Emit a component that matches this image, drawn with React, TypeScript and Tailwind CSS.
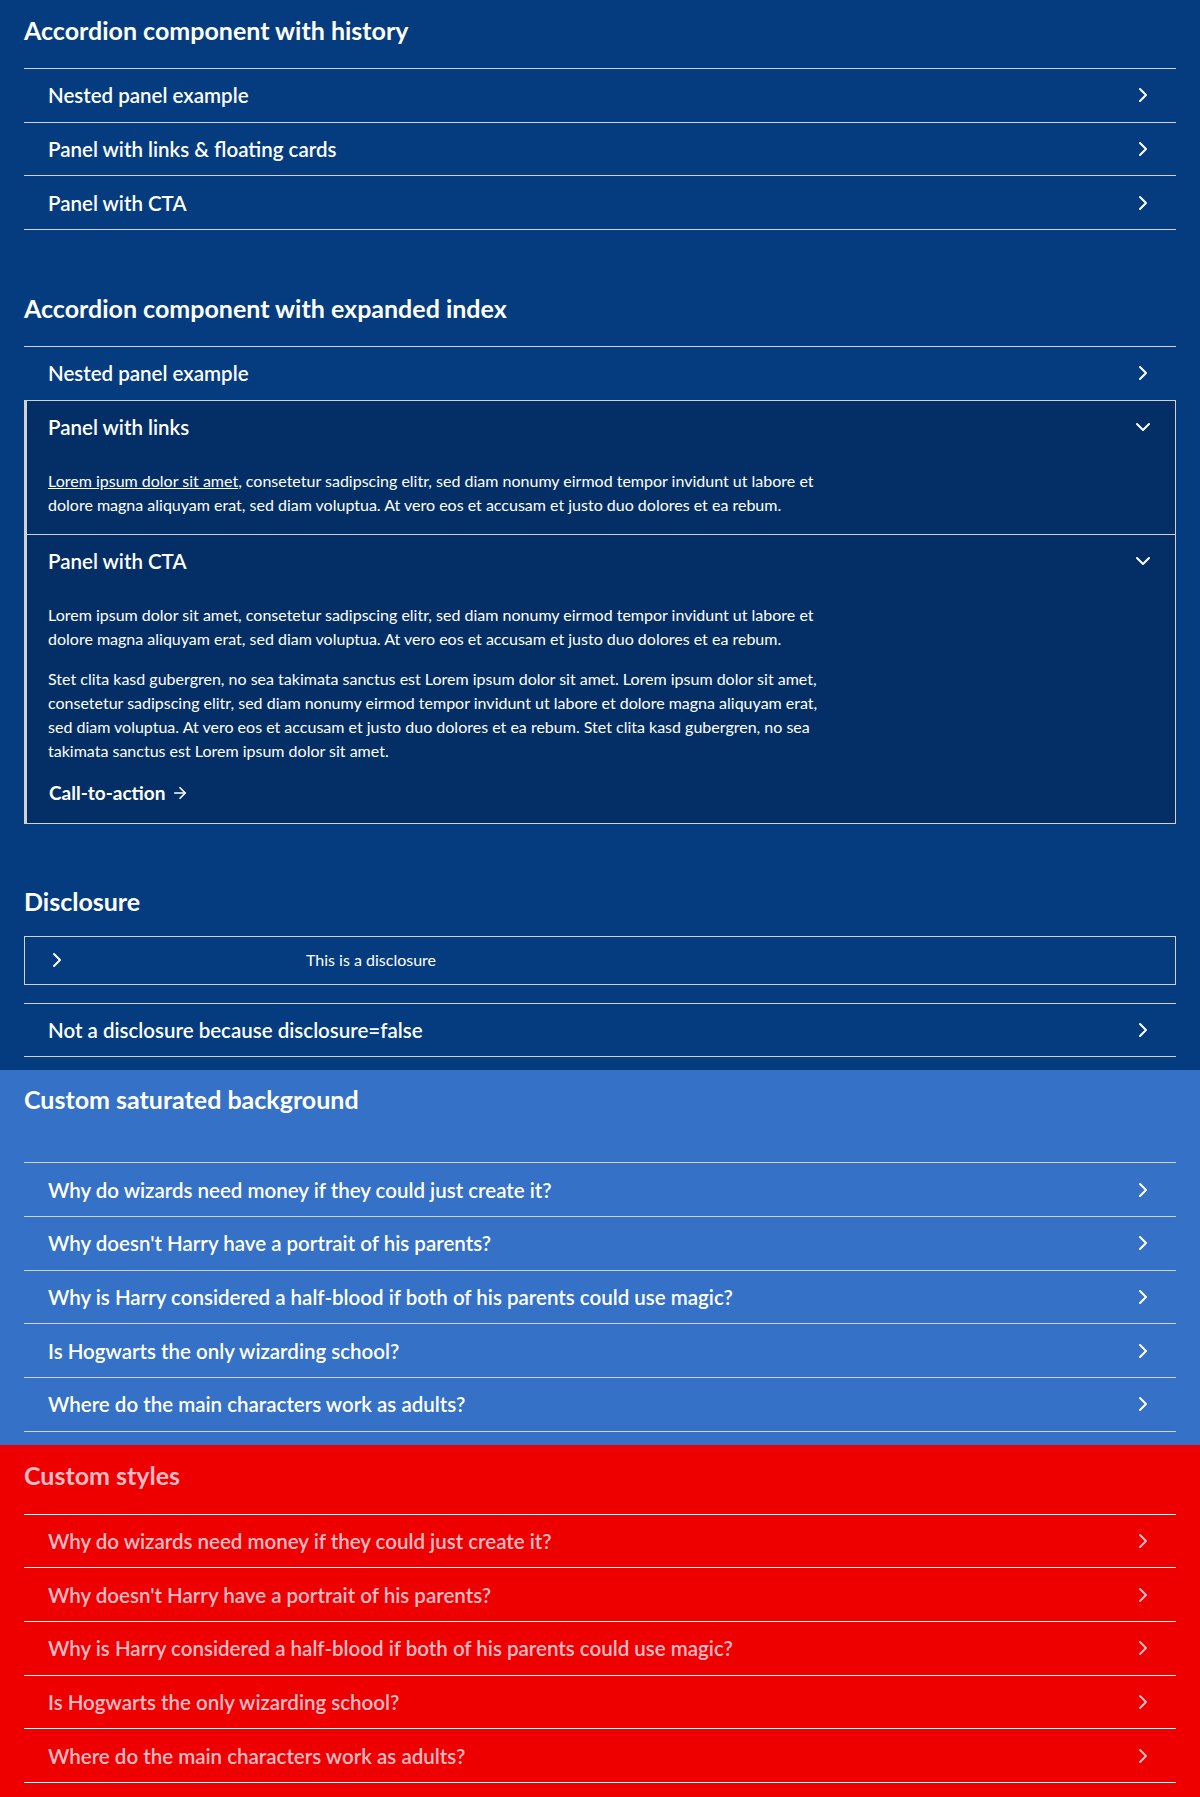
import { ArrowRight, ChevronDown, ChevronRight } from 'lucide-react'

interface RowProps {
  title: string
  last?: boolean
  line?: string
  text?: string
}

function Row({ title, last, line = 'border-[#d2d2d2]', text = 'text-white' }: RowProps) {
  return (
    <div className={`box-content flex h-[52.67px] items-center justify-between border-t ${line} ${last ? 'border-b' : ''} pl-6 pr-[21px] ${text}`}>
      <span className="text-[20.5px] font-semibold leading-[28px]">{title}</span>
      <ChevronRight size={24} strokeWidth={2} />
    </div>
  )
}

function Title({ children, className = '' }: { children: React.ReactNode; className?: string }) {
  return <h2 className={`text-[25px] font-bold leading-[28px] ${className}`}>{children}</h2>
}

const faqs = [
  'Why do wizards need money if they could just create it?',
  "Why doesn't Harry have a portrait of his parents?",
  'Why is Harry considered a half-blood if both of his parents could use magic?',
  'Is Hogwarts the only wizarding school?',
  'Where do the main characters work as adults?',
]

export default function App() {
  return (
    <div className="w-[1200px] text-white" style={{ fontFamily: 'Lato, "Liberation Sans", sans-serif' }}>
      {/* Dark blue examples */}
      <section className="bg-[#043c7f] px-6 pt-4 pb-[13px]">
        <Title className="mb-6">Accordion component with history</Title>
        <div>
          <Row title="Nested panel example" />
          <Row title="Panel with links & floating cards" />
          <Row title="Panel with CTA" last />
        </div>

        <Title className="mt-[64px] mb-6">Accordion component with expanded index</Title>
        <div>
          <Row title="Nested panel example" />
          {/* Expanded: Panel with links */}
          <div className="border-t border-l-[3px] border-r border-[#d2d2d2] bg-[#032f66]">
            <div className="flex h-[53px] items-center justify-between pl-[21px] pr-[20px]">
              <span className="text-[20.5px] font-semibold leading-[28px]">Panel with links</span>
              <ChevronDown size={24} strokeWidth={2} />
            </div>
            <div className="pl-[21px] pt-[15px] pb-[17px]">
              <p className="max-w-[790px] text-[16px] leading-[24px]">
                <a href="#" className="underline">Lorem ipsum dolor sit amet</a>, consetetur sadipscing elitr, sed diam nonumy eirmod tempor invidunt ut labore et dolore magna aliquyam erat, sed diam voluptua. At vero eos et accusam et justo duo dolores et ea rebum.
              </p>
            </div>
          </div>
          {/* Expanded: Panel with CTA */}
          <div className="border-y border-l-[3px] border-r border-[#d2d2d2] bg-[#032f66]">
            <div className="flex h-[53px] items-center justify-between pl-[21px] pr-[20px]">
              <span className="text-[20.5px] font-semibold leading-[28px]">Panel with CTA</span>
              <ChevronDown size={24} strokeWidth={2} />
            </div>
            <div className="pl-[21px] pt-[15px] pb-[17px] text-[16px] leading-[24px]">
              <p className="mb-4 max-w-[790px]">
                Lorem ipsum dolor sit amet, consetetur sadipscing elitr, sed diam nonumy eirmod tempor invidunt ut labore et dolore magna aliquyam erat, sed diam voluptua. At vero eos et accusam et justo duo dolores et ea rebum.
              </p>
              <p className="max-w-[790px]">
                Stet clita kasd gubergren, no sea takimata sanctus est Lorem ipsum dolor sit amet. Lorem ipsum dolor sit amet, consetetur sadipscing elitr, sed diam nonumy eirmod tempor invidunt ut labore et dolore magna aliquyam erat, sed diam voluptua. At vero eos et accusam et justo duo dolores et ea rebum. Stet clita kasd gubergren, no sea takimata sanctus est Lorem ipsum dolor sit amet.
              </p>
              <a href="#" className="mt-[18px] inline-flex items-center gap-1.5 pl-px text-[19px] font-bold leading-[24px]">
                Call-to-action <ArrowRight size={18} strokeWidth={2.25} />
              </a>
            </div>
          </div>
        </div>

        <Title className="mt-[63px] mb-[21px]">Disclosure</Title>
        <div className="flex h-[49px] items-center border border-[#d2d2d2] pl-5">
          <ChevronRight size={24} strokeWidth={2} />
          <span className="ml-[237px] text-[16px] leading-[24px]">This is a disclosure</span>
        </div>
        <div className="mt-[18px]">
          <Row title="Not a disclosure because disclosure=false" last />
        </div>
      </section>

      {/* Saturated background */}
      <section className="bg-[#3571c7] px-6 pt-[15px] pb-[13px]">
        <Title className="mb-[49px]">Custom saturated background</Title>
        <div>
          {faqs.map((q, i) => (
            <Row key={q} title={q} last={i === faqs.length - 1} />
          ))}
        </div>
      </section>

      {/* Custom styles */}
      <section className="bg-[#ee0000] px-6 pt-4 pb-[14px]">
        <Title className="mb-[25px] text-[#fdbcc4]">Custom styles</Title>
        <div>
          {faqs.map((q, i) => (
            <Row key={q} title={q} last={i === faqs.length - 1} line="border-white" text="text-[#fdbcc4]" />
          ))}
        </div>
      </section>
    </div>
  )
}
